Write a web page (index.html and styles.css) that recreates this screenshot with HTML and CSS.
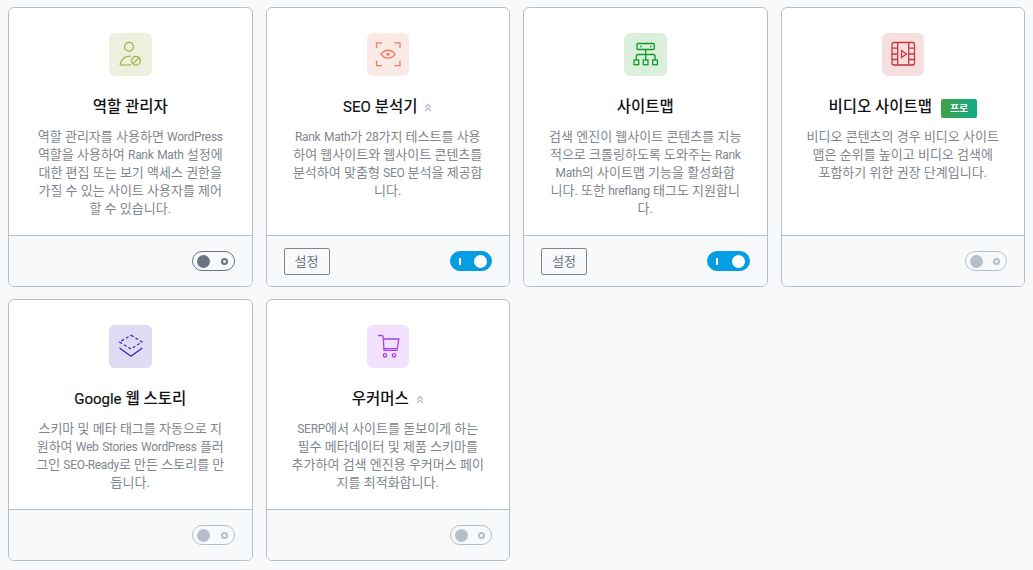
FILE: index.html
```
<!DOCTYPE html>
<html lang="ko">
<head>
<meta charset="utf-8">
<title>모듈</title>
<link rel="stylesheet" href="styles.css">
</head>
<body>
<main class="grid">
  <section class="card">
    <div class="card-body">
      <div class="icon icon-role">
        <svg viewBox="0 0 43 43" width="43" height="43"><g fill="none" stroke="currentColor" stroke-width="1.200"><circle cx="20" cy="13.700" r="4.400"/><path d="M11 32h11M11 32c1-5 4-9 11-9"/><circle cx="27" cy="27.700" r="4.400"/><path d="M24 30.700l6-6"/></g></svg>
      </div>
      <h2 class="title"><span>역할 관리자</span></h2>
      <p class="desc">역할 관리자를 사용하면 <span class="lat">WordPress</span><br>역할을 사용하여 <span class="lat">Rank Math</span> 설정에<br>대한 편집 또는 보기 액세스 권한을<br>가질 수 있는 사이트 사용자를 제어<br>할 수 있습니다.</p>
    </div>
    <div class="card-foot">
      <span class="toggle toggle-off"><i class="knob"></i><i class="ring"></i></span>
    </div>
  </section>

  <section class="card">
    <div class="card-body">
      <div class="icon icon-seo">
        <svg viewBox="0 0 43 43" width="43" height="43"><g fill="none" stroke="currentColor" stroke-width="1.300"><path d="M9.500 15V9.800h5.500M27.500 9.800H33V15M33 27.500v5.200h-5.500M15 32.700H9.500v-5.200"/><path d="M14 21.200c3.800-5.300 10.400-5.300 14.200 0-3.800 5.300-10.400 5.300-14.200 0z"/></g><circle cx="21.100" cy="21.200" r="1.600" fill="currentColor"/></svg>
      </div>
      <h2 class="title"><span><span class="title-lat">SEO</span> 분석기</span><svg class="chev" viewBox="0 0 8 9" width="8" height="9"><path d="M1 4.500l3-3 3 3M1 8l3-3 3 3" fill="none" stroke="currentColor" stroke-width="1.300"/></svg></h2>
      <p class="desc"><span class="lat">Rank Math</span>가 <span class="lat">28</span>가지 테스트를 사용<br>하여 웹사이트와 웹사이트 콘텐츠를<br>분석하여 맞춤형 <span class="lat">SEO</span> 분석을 제공합<br>니다.</p>
    </div>
    <div class="card-foot">
      <a class="btn">설정</a>
      <span class="toggle toggle-on"><i class="bar"></i><i class="knob"></i></span>
    </div>
  </section>

  <section class="card">
    <div class="card-body">
      <div class="icon icon-map">
        <svg viewBox="0 0 43 43" width="43" height="43"><g fill="none" stroke="currentColor" stroke-width="1.300"><rect x="13" y="10.500" width="17.300" height="6" rx="1"/><path d="M21.700 16.500V27M12.300 27v-3.500q0-2 2-2h14.800q2 0 2 2V27"/><rect x="10" y="27" width="4.700" height="4.700"/><rect x="19.300" y="27" width="4.700" height="4.700"/><rect x="28.700" y="27" width="4.700" height="4.700"/><path d="M16 13.500h1.500M26 13.500h1.500"/></g></svg>
      </div>
      <h2 class="title"><span>사이트맵</span></h2>
      <p class="desc">검색 엔진이 웹사이트 콘텐츠를 지능<br>적으로 크롤링하도록 도와주는 <span class="lat">Rank</span><br><span class="lat">Math</span>의 사이트맵 기능을 활성화합<br>니다. 또한 <span class="lat">hreflang</span> 태그도 지원합니<br>다.</p>
    </div>
    <div class="card-foot">
      <a class="btn">설정</a>
      <span class="toggle toggle-on"><i class="bar"></i><i class="knob"></i></span>
    </div>
  </section>

  <section class="card">
    <div class="card-body">
      <div class="icon icon-video">
        <svg viewBox="0 0 43 43" width="43" height="43"><g fill="none" stroke="currentColor" stroke-width="1.300"><rect x="10" y="9.500" width="22.500" height="22.500" rx="2"/><path d="M15.700 9.500V32M26.700 9.500V32M10 15.200h5.700M10 21h5.700M10 26.500h5.700M26.700 15.200h5.800M26.700 21h5.800M26.700 26.500h5.800"/><path d="M19.500 17.500l5 3.500-5 3.500z"/></g></svg>
      </div>
      <h2 class="title"><span>비디오 사이트맵</span><span class="badge">프로</span></h2>
      <p class="desc">비디오 콘텐츠의 경우 비디오 사이트<br>맵은 순위를 높이고 비디오 검색에<br>포함하기 위한 권장 단계입니다.</p>
    </div>
    <div class="card-foot">
      <span class="toggle toggle-disabled"><i class="knob"></i><i class="ring"></i></span>
    </div>
  </section>

  <section class="card">
    <div class="card-body">
      <div class="icon icon-web">
        <svg viewBox="0 0 43 43" width="43" height="43"><g fill="none" stroke="currentColor" stroke-width="1.200"><path d="M22 10.300L33 17 22 24 10.500 17z" stroke-dasharray="3 2.200"/><path d="M10.500 23L22 31.300 33.300 23"/></g></svg>
      </div>
      <h2 class="title"><span><span class="title-lat">Google</span> 웹 스토리</span></h2>
      <p class="desc">스키마 및 메타 태그를 자동으로 지<br>원하여 <span class="lat">Web Stories WordPress</span> 플러<br>그인 <span class="lat">SEO-Ready</span>로 만든 스토리를 만<br>듭니다.</p>
    </div>
    <div class="card-foot">
      <span class="toggle toggle-disabled"><i class="knob"></i><i class="ring"></i></span>
    </div>
  </section>

  <section class="card">
    <div class="card-body">
      <div class="icon icon-cart">
        <svg viewBox="0 0 43 43" width="43" height="43"><g fill="none" stroke="currentColor" stroke-width="1.300"><path d="M11 10.500h3.500q1.500 0 1.700 1.500L17 25.300h14"/><path d="M16.300 14h15.500l-1.500 9.700H17"/><circle cx="18" cy="30.300" r="1.700"/><circle cx="27" cy="30.300" r="1.700"/></g></svg>
      </div>
      <h2 class="title"><span>우커머스</span><svg class="chev" viewBox="0 0 8 9" width="8" height="9"><path d="M1 4.500l3-3 3 3M1 8l3-3 3 3" fill="none" stroke="currentColor" stroke-width="1.300"/></svg></h2>
      <p class="desc"><span class="lat">SERP</span>에서 사이트를 돋보이게 하는<br>필수 메타데이터 및 제품 스키마를<br>추가하여 검색 엔진용 우커머스 페이<br>지를 최적화합니다.</p>
    </div>
    <div class="card-foot">
      <span class="toggle toggle-disabled"><i class="knob"></i><i class="ring"></i></span>
    </div>
  </section>
</main>
</body>
</html>
```

FILE: styles.css
```
* { box-sizing: border-box; }

html, body { height: 100%; }

body {
  margin: 0;
  padding: 7px 8px 0;
  background: #f7f9fb;
  font-family: Roboto, "Noto Sans CJK KR", sans-serif;
  overflow: hidden;
}

.grid {
  display: grid;
  grid-template-columns: repeat(4, 1fr);
  gap: 12.400px 13px;
  align-items: stretch;
}

.card {
  display: flex;
  flex-direction: column;
  background: #fff;
  border: 1px solid #b5bfc9;
  border-radius: 6px;
  overflow: hidden;
}

.card-body {
  flex: 1;
  padding: 25px 10px 17px;
  text-align: center;
}

.icon {
  width: 42.500px;
  height: 43px;
  margin: 0 auto;
  border-radius: 6px;
}

.icon svg { display: block; }

.icon-role  { background: #ecf1df; color: #a0ae35; }
.icon-seo   { background: #fae9e4; color: #ee7a5e; }
.icon-map   { background: #dcefdc; color: #109a26; }
.icon-video { background: #f5e0df; color: #c9363d; }
.icon-web   { background: #dfdbf2; color: #3a1fc0; }
.icon-cart  { background: #f1e1fd; color: #a640f5; }

.title {
  display: flex;
  align-items: center;
  justify-content: center;
  gap: 7px;
  height: 22px;
  margin: 20px 0 10px;
  font-size: 15.500px;
  line-height: 22px;
  font-weight: 500;
  color: #101215;
  white-space: pre;
}

.title-lat {
  font-size: 15px;
  font-weight: 400;
  -webkit-text-stroke: 0.200px currentColor;
}

.chev { color: #b5bfc9; margin-top: 1px; }

.badge {
  display: inline-flex;
  align-items: center;
  justify-content: center;
  width: 36px;
  height: 19px;
  margin: 3px 0 0 2px;
  border-radius: 2px;
  background: linear-gradient(90deg, #43a047, #10ac84);
  color: #fff;
  font-size: 10px;
  font-weight: 700;
}

.desc {
  margin: 0;
  font-size: 13px;
  line-height: 18px;
  color: #7f868d;
  white-space: nowrap;
}

.lat {
  font-size: 12px;
  letter-spacing: -0.300px;
  word-spacing: 1px;
}

.card-foot {
  display: flex;
  align-items: center;
  justify-content: flex-end;
  height: 51px;
  padding: 0 17px;
  background: #f8f9fb;
  border-top: 1px solid #b5bfc9;
}

.btn {
  margin-right: auto;
  width: 46px;
  height: 27px;
  border: 1px solid #7f868d;
  border-radius: 2px;
  font-size: 13px;
  line-height: 25px;
  text-align: center;
  color: #6b7280;
}

.toggle {
  display: flex;
  align-items: center;
  justify-content: space-between;
  width: 42.500px;
  height: 20px;
  padding: 0 6px 0 4px;
  border-radius: 10px;
  border: 1px solid #6b7280;
  background: #f8f9fb;
}

.knob {
  width: 13px;
  height: 13px;
  border-radius: 50%;
  background: #6b7280;
}

.ring {
  width: 7px;
  height: 7px;
  border-radius: 50%;
  border: 2px solid #6b7280;
}

.toggle-disabled { border-color: #b5bfc9; }
.toggle-disabled .knob { background: #b5bfc9; }
.toggle-disabled .ring { border-color: #b5bfc9; }

.toggle-on {
  background: #069de3;
  border-color: #069de3;
  padding: 0 4px 0 8px;
}

.toggle-on .knob { background: #fff; }

.bar {
  width: 2px;
  height: 7px;
  background: #fff;
}
```
